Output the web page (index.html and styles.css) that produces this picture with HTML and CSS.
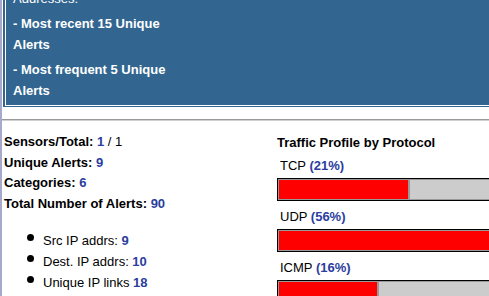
FILE: index.html
```html
<!DOCTYPE html>
<html lang="en">
<head>
  <meta charset="UTF-8" />
  <title>Alert Summary</title>
  <link rel="stylesheet" href="styles.css">
</head>
<body>
  <div class="page">
    <div class="header">
      <div class="header-inner">
        <div class="links">
          <div class="link-item plain">Addresses:</div>
          <div class="link-item">- Most recent 15 Unique Alerts</div>
          <div class="link-item">- Most frequent 5 Unique Alerts</div>
        </div>
      </div>
    </div>

    <div class="rule"></div>

    <div class="summary">
      <div class="stats">
        <div class="stat"><b>Sensors/Total:</b> <span class="num">1</span> / 1</div>
        <div class="stat"><b>Unique Alerts:</b> <span class="num">9</span></div>
        <div class="stat"><b>Categories:</b> <span class="num">6</span></div>
        <div class="stat"><b>Total Number of Alerts:</b> <span class="num">90</span></div>

        <ul class="ip-list">
          <li>Src IP addrs: <span class="num">9</span></li>
          <li>Dest. IP addrs: <span class="num">10</span></li>
          <li>Unique IP links <span class="num">18</span></li>
        </ul>
      </div>

      <div class="profile">
        <div class="profile-title">Traffic Profile by Protocol</div>

        <div class="proto-label">TCP <span class="num">(21%)</span></div>
        <div class="bar"><div class="bar-fill" style="width:21%"></div><div class="bar-rest"></div></div>

        <div class="proto-label">UDP <span class="num">(56%)</span></div>
        <div class="bar"><div class="bar-fill" style="width:56%"></div><div class="bar-rest"></div></div>

        <div class="proto-label">ICMP <span class="num">(16%)</span></div>
        <div class="bar"><div class="bar-fill" style="width:16%"></div><div class="bar-rest"></div></div>
      </div>
    </div>
  </div>
</body>
</html>
```

FILE: styles.css
```css
html, body {
  margin: 0;
  padding: 0;
  background: #fff;
}

body {
  font-family: "Liberation Sans", Arial, sans-serif;
  font-size: 13px;
  color: #000;
  overflow: hidden;
}

.page {
  border-left: 2px solid #a8a8cc;
  min-height: 296px;
  overflow: hidden;
}

/* blue header box, top part is cut off */
.header {
  margin-top: -12px;
  margin-left: 1px;
  padding: 0 0 1px 2px;
  background: #326690;
}

.header-inner {
  border-left: 1px solid #fff;
  border-bottom: 1px solid #fff;
  padding-left: 7px;
}

.links {
  width: 170px;
  color: #fff;
}

.link-item {
  font-weight: bold;
  line-height: 21px;
  margin-bottom: 4px;
}

.link-item.plain {
  font-weight: normal;
}

.rule {
  margin-top: 12px;
  border-top: 1px solid #999;
  border-bottom: 1px solid #d0d0d0;
}

.summary {
  display: flex;
  padding-top: 11px;
}

.stats {
  width: 273px;
  padding-left: 2px;
  flex-shrink: 0;
}

.stat {
  line-height: 20.67px;
}

.num {
  color: #2b3d9e;
  font-weight: bold;
}

.ip-list {
  list-style: none;
  margin: 15px 0 0;
  padding-left: 23px;
}

.ip-list li {
  line-height: 21px;
}

.ip-list li::before {
  content: "";
  display: inline-block;
  width: 7px;
  height: 7px;
  border-radius: 50%;
  background: #000;
  margin-right: 9px;
  vertical-align: 4px;
}

.profile {
  flex: 1;
  min-width: 0;
  overflow: hidden;
}

.profile-title {
  font-weight: bold;
  line-height: 21px;
}

.proto-label {
  line-height: 21px;
  padding-left: 3px;
  margin-top: 2px;
}

.bar + .proto-label {
  margin-top: 5px;
}

.bar {
  display: flex;
  width: 628px;
  height: 23px;
  margin-top: 2px;
  border: 1px solid #000;
  box-sizing: border-box;
}

.bar-fill {
  background: #ff0000;
  border: 1px solid #999;
  box-sizing: border-box;
}

.bar-rest {
  flex: 1;
  background: #ccc;
  border: 1px solid #999;
}
```
